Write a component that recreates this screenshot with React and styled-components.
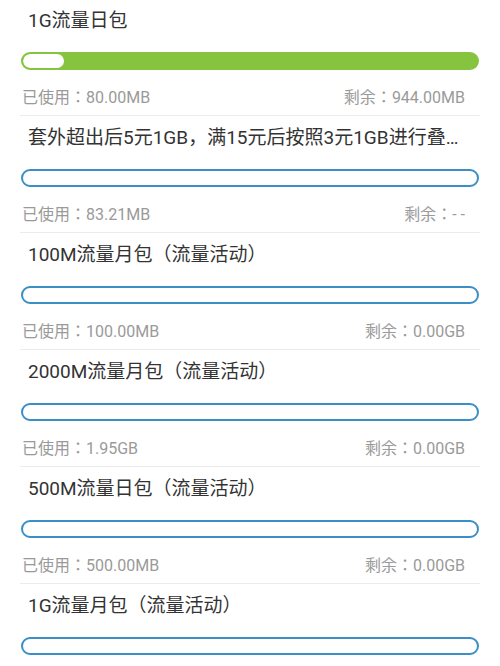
import React from 'react';
import styled, { createGlobalStyle } from 'styled-components';

const GlobalStyle = createGlobalStyle`
  body {
    margin: 0;
    background: #ffffff;
    font-family: Roboto, "Noto Sans CJK SC", sans-serif;
  }
`;

const Page = styled.div`
  width: 500px;
  height: 666px;
  overflow: hidden;
  background: #ffffff;
`;

const Section = styled.div`
  margin: 0 20px;
  padding: 8px 0 6px;
  border-bottom: 1px solid #ececec;
  display: flex;
  flex-direction: column;

  &:first-child {
    padding-top: 7px;
  }
`;

const Title = styled.div`
  padding: 0 8px 0 8px;
  font-size: 19px;
  line-height: 28px;
  color: #333333;
  white-space: nowrap;
  overflow: hidden;
  text-overflow: ellipsis;
`;

const Track = styled.div`
  margin: 17px 1px 0;
  height: 18px;
  box-sizing: border-box;
  border: 2px solid ${p => p.$color};
  border-radius: 9px;
  background: ${p => (p.$filled ? p.$color : '#ffffff')};
  overflow: hidden;
`;

const Fill = styled.div`
  height: 100%;
  background: #ffffff;
  border-radius: 7px;
`;

const Stats = styled.div`
  margin-top: 17px;
  padding: 0 15px 0 2px;
  display: flex;
  justify-content: space-between;
  font-family: Roboto, "Noto Sans CJK JP", sans-serif;
  font-size: 16px;
  line-height: 22px;
  color: #9a9a9a;
`;

const packages = [
  { title: '1G流量日包', used: '80.00MB', left: '944.00MB', percent: 9, green: true },
  { title: '套外超出后5元1GB，满15元后按照3元1GB进行叠加收费', used: '83.21MB', left: '- -' },
  { title: '100M流量月包（流量活动）', used: '100.00MB', left: '0.00GB' },
  { title: '2000M流量月包（流量活动）', used: '1.95GB', left: '0.00GB' },
  { title: '500M流量日包（流量活动）', used: '500.00MB', left: '0.00GB' },
  { title: '1G流量月包（流量活动）', used: '1.00GB', left: '0.00GB' },
];

export default function App() {
  return (
    <Page>
      <GlobalStyle />
      {packages.map((pkg, i) => (
        <Section key={i}>
          <Title>{pkg.title}</Title>
          <Track $color={pkg.green ? '#86c440' : '#3a8fc6'} $filled={pkg.green}>
            {pkg.green && <Fill style={{ width: `${pkg.percent}%` }} />}
          </Track>
          <Stats>
            <span>已使用：{pkg.used}</span>
            <span>剩余：{pkg.left}</span>
          </Stats>
        </Section>
      ))}
    </Page>
  );
}
